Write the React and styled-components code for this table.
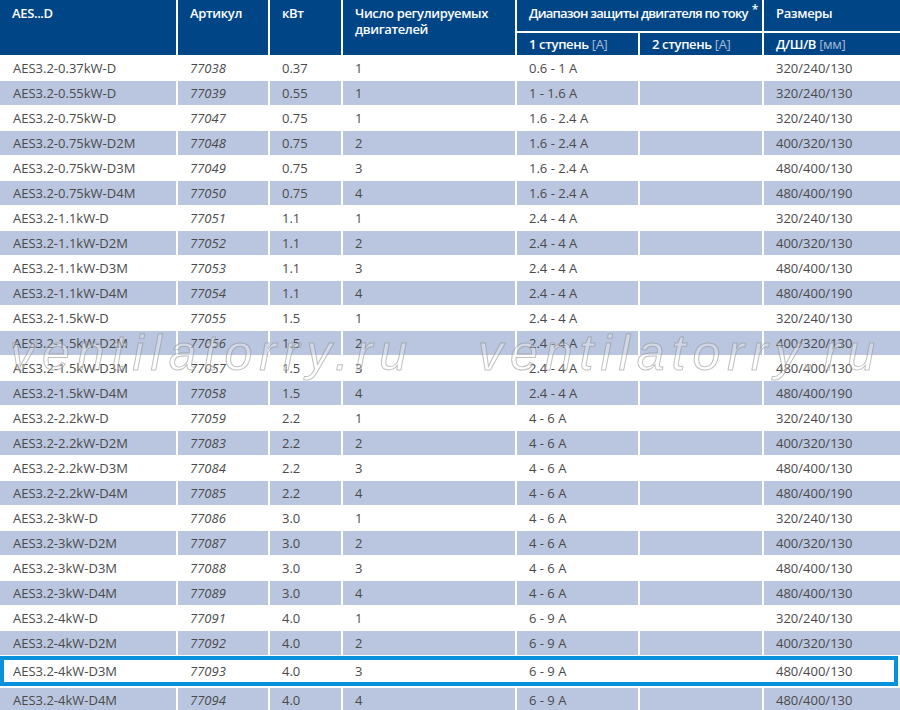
import React from 'react';
import styled, { createGlobalStyle, css } from 'styled-components';

const COLUMNS = '176px 90px 71px 172px 121px 122px 1fr';

const rows = [
  ['AES3.2-0.37kW-D', '77038', '0.37', '1', '0.6 - 1 A', '320/240/130'],
  ['AES3.2-0.55kW-D', '77039', '0.55', '1', '1 - 1.6 A', '320/240/130'],
  ['AES3.2-0.75kW-D', '77047', '0.75', '1', '1.6 - 2.4 A', '320/240/130'],
  ['AES3.2-0.75kW-D2M', '77048', '0.75', '2', '1.6 - 2.4 A', '400/320/130'],
  ['AES3.2-0.75kW-D3M', '77049', '0.75', '3', '1.6 - 2.4 A', '480/400/130'],
  ['AES3.2-0.75kW-D4M', '77050', '0.75', '4', '1.6 - 2.4 A', '480/400/190'],
  ['AES3.2-1.1kW-D', '77051', '1.1', '1', '2.4 - 4 A', '320/240/130'],
  ['AES3.2-1.1kW-D2M', '77052', '1.1', '2', '2.4 - 4 A', '400/320/130'],
  ['AES3.2-1.1kW-D3M', '77053', '1.1', '3', '2.4 - 4 A', '480/400/130'],
  ['AES3.2-1.1kW-D4M', '77054', '1.1', '4', '2.4 - 4 A', '480/400/190'],
  ['AES3.2-1.5kW-D', '77055', '1.5', '1', '2.4 - 4 A', '320/240/130'],
  ['AES3.2-1.5kW-D2M', '77056', '1.5', '2', '2.4 - 4 A', '400/320/130'],
  ['AES3.2-1.5kW-D3M', '77057', '1.5', '3', '2.4 - 4 A', '480/400/130'],
  ['AES3.2-1.5kW-D4M', '77058', '1.5', '4', '2.4 - 4 A', '480/400/190'],
  ['AES3.2-2.2kW-D', '77059', '2.2', '1', '4 - 6 A', '320/240/130'],
  ['AES3.2-2.2kW-D2M', '77083', '2.2', '2', '4 - 6 A', '400/320/130'],
  ['AES3.2-2.2kW-D3M', '77084', '2.2', '3', '4 - 6 A', '480/400/130'],
  ['AES3.2-2.2kW-D4M', '77085', '2.2', '4', '4 - 6 A', '480/400/190'],
  ['AES3.2-3kW-D', '77086', '3.0', '1', '4 - 6 A', '320/240/130'],
  ['AES3.2-3kW-D2M', '77087', '3.0', '2', '4 - 6 A', '400/320/130'],
  ['AES3.2-3kW-D3M', '77088', '3.0', '3', '4 - 6 A', '480/400/130'],
  ['AES3.2-3kW-D4M', '77089', '3.0', '4', '4 - 6 A', '480/400/130'],
  ['AES3.2-4kW-D', '77091', '4.0', '1', '6 - 9 A', '320/240/130'],
  ['AES3.2-4kW-D2M', '77092', '4.0', '2', '6 - 9 A', '400/320/130'],
  ['AES3.2-4kW-D3M', '77093', '4.0', '3', '6 - 9 A', '480/400/130'],
  ['AES3.2-4kW-D4M', '77094', '4.0', '4', '6 - 9 A', '480/400/130'],
];

const HIGHLIGHTED = 24;

const GlobalStyle = createGlobalStyle`
  html, body {
    margin: 0;
    padding: 0;
    background: #fff;
    overflow: hidden;
  }
  body {
    font-family: 'Open Sans', 'Liberation Sans', sans-serif;
  }
`;

const Page = styled.div`
  position: relative;
  width: 900px;
  height: 710px;
  overflow: hidden;
  display: flex;
  flex-direction: column;
  gap: 1px;
`;

const Header = styled.div`
  display: grid;
  grid-template-columns: ${COLUMNS};
  grid-template-rows: 31px 22px;
  gap: 2px;
`;

const HeadCell = styled.div`
  background: #004687;
  color: #fff;
  font-size: 13px;
  font-weight: 600;
  letter-spacing: ${({ tight }) => (tight ? '-0.75px' : '-0.35px')};
  line-height: 16px;
  padding: ${({ sub }) => (sub ? '3px 12px 0' : '5px 6px 0 12px')};
  grid-column: ${({ col }) => col};
  grid-row: ${({ row }) => row || 'auto'};
  white-space: ${({ wrap }) => (wrap ? 'normal' : 'nowrap')};
  overflow: hidden;
`;

const Unit = styled.span`
  font-weight: 400;
  color: #a9bbdb;
`;

const Star = styled.sup`
  font-size: 12px;
  line-height: 0;
  vertical-align: 4px;
  margin-left: 4px;
`;

const Body = styled.div`
  display: flex;
  flex-direction: column;
  gap: 2px;
`;

const Row = styled.div`
  display: grid;
  grid-template-columns: ${COLUMNS};
  column-gap: 2px;
  height: 23px;
  flex-shrink: 0;
  ${({ highlighted }) => highlighted && css`
    height: 30px;
    margin-right: 2px;
    box-shadow: inset 0 0 0 4px #0891db;
  `}
`;

const Cell = styled.div`
  background: ${({ shaded }) => (shaded ? '#bac6df' : 'transparent')};
  color: #4a4a4a;
  font-size: 13px;
  font-style: ${({ italic }) => (italic ? 'italic' : 'normal')};
  line-height: 23px;
  padding: 1px 12px 0 ${({ first }) => (first ? '13px' : '12px')};
  display: flex;
  align-items: center;
  white-space: nowrap;
`;

const Watermark = styled.div`
  position: absolute;
  top: 324px;
  left: ${({ left }) => left}px;
  font-family: 'Liberation Sans', sans-serif;
  font-style: italic;
  font-size: 50px;
  letter-spacing: 7px;
  color: rgba(255, 255, 255, 0.3);
  -webkit-text-stroke: 1px rgba(140, 140, 140, 0.55);
  pointer-events: none;
  white-space: nowrap;
`;

export default function App() {
  return (
    <>
      <GlobalStyle />
      <Page>
        <Header>
          <HeadCell col="1" row="1 / 3">AES...D</HeadCell>
          <HeadCell col="2" row="1 / 3">Артикул</HeadCell>
          <HeadCell col="3" row="1 / 3">кВт</HeadCell>
          <HeadCell col="4" row="1 / 3" wrap>
            Число регулируемых двигателей
          </HeadCell>
          <HeadCell col="5 / 7" row="1" tight>
            Диапазон защиты двигателя по току<Star>*</Star>
          </HeadCell>
          <HeadCell col="7" row="1">Размеры</HeadCell>
          <HeadCell col="5" row="2" sub>1 ступень <Unit>[A]</Unit></HeadCell>
          <HeadCell col="6" row="2" sub>2 ступень <Unit>[A]</Unit></HeadCell>
          <HeadCell col="7" row="2" sub>Д/Ш/В <Unit>[мм]</Unit></HeadCell>
        </Header>
        <Body>
          {rows.map((r, i) => {
            const shaded = i % 2 === 1;
            return (
              <Row key={r[1]} highlighted={i === HIGHLIGHTED}>
                <Cell shaded={shaded} first>{r[0]}</Cell>
                <Cell shaded={shaded} italic>{r[1]}</Cell>
                <Cell shaded={shaded}>{r[2]}</Cell>
                <Cell shaded={shaded}>{r[3]}</Cell>
                <Cell shaded={shaded}>{r[4]}</Cell>
                <Cell shaded={shaded} />
                <Cell shaded={shaded}>{r[5]}</Cell>
              </Row>
            );
          })}
        </Body>
        <Watermark left={10}>ventilatorry.ru</Watermark>
        <Watermark left={478}>ventilatorry.ru</Watermark>
      </Page>
    </>
  );
}
